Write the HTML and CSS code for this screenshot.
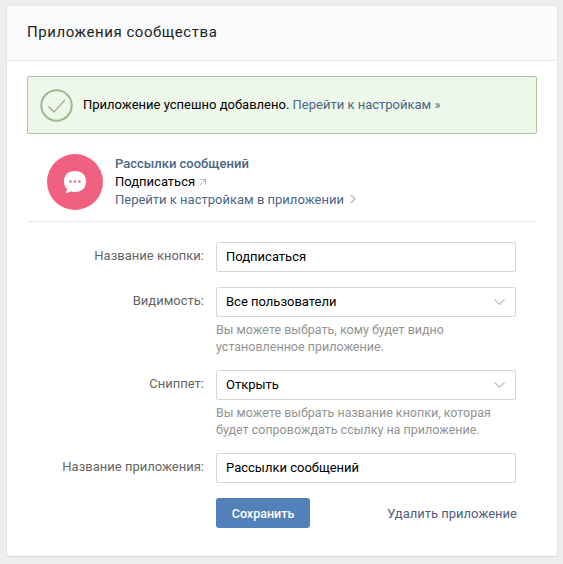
FILE: index.html
```html
<!DOCTYPE html>
<html>
<head>
<title>Приложения сообщества</title>
<meta charset="utf-8" />
<link rel="stylesheet" href="styles.css">
</head>

<body>

<div class="page">

	<div class="header">Приложения сообщества</div>

	<div class="content">

		<div class="notice">
			<svg class="notice-icon" width="33" height="33" viewBox="0 0 33 33">
				<circle cx="16.5" cy="16.5" r="15.2" fill="none" stroke="#9bb98f" stroke-width="2" />
				<path d="M8.5 17.5l5.5 5.5 11-12" fill="none" stroke="#9bb98f" stroke-width="1.5" />
			</svg>
			<span class="notice-text">Приложение успешно добавлено. <a href="#">Перейти к настройкам »</a></span>
		</div>

		<div class="app">
			<div class="app-logo">
				<svg width="24" height="24" viewBox="0 0 24 24">
					<path d="M12 1c6.6 0 11 4 11 10.500S18.600 22 12 22c-1.500 0-3-.2-4.300-.7C6.400 22.400 4.500 23 2.500 23c1-1.200 1.500-2.600 1.500-4C2 17 1 14.500 1 11.500 1 5 5.400 1 12 1z" fill="#fff" />
					<circle cx="7.500" cy="11.500" r="1.200" fill="#f0607f" />
					<circle cx="12" cy="11.500" r="1.200" fill="#f0607f" />
					<circle cx="16.500" cy="11.500" r="1.200" fill="#f0607f" />
				</svg>
			</div>
			<div class="app-info">
				<a class="app-name" href="#">Рассылки сообщений</a>
				<div class="app-action">Подписаться
					<svg width="7" height="7" viewBox="0 0 7 7"><path d="M.5 6.500l6-6M1.500.5h5v5" fill="none" stroke="#99a2ad" stroke-width=".8" /></svg>
				</div>
				<a class="app-link" href="#">Перейти к настройкам в приложении
					<svg class="app-arrow" width="6" height="10" viewBox="0 0 6 10"><path d="M1 1l4 4-4 4" fill="none" stroke="#b4bcc6" stroke-width="1.300" /></svg>
				</a>
			</div>
		</div>

		<div class="form">

			<div class="row">
				<label class="label">Название кнопки:</label>
				<div class="field"><div class="input">Подписаться</div></div>
			</div>

			<div class="row">
				<label class="label">Видимость:</label>
				<div class="field">
					<div class="input select">Все пользователи
						<svg width="11" height="6" viewBox="0 0 11 6"><path d="M.5.5l5 5 5-5" fill="none" stroke="#b4bcc6" stroke-width="1.100" /></svg>
					</div>
					<p class="help">Вы можете выбрать, кому будет видно установленное приложение.</p>
				</div>
			</div>

			<div class="row">
				<label class="label">Сниппет:</label>
				<div class="field">
					<div class="input select">Открыть
						<svg width="11" height="6" viewBox="0 0 11 6"><path d="M.5.5l5 5 5-5" fill="none" stroke="#b4bcc6" stroke-width="1.100" /></svg>
					</div>
					<p class="help">Вы можете выбрать название кнопки, которая будет сопровождать ссылку на приложение.</p>
				</div>
			</div>

			<div class="row">
				<label class="label">Название приложения:</label>
				<div class="field"><div class="input">Рассылки сообщений</div></div>
			</div>

			<div class="row actions">
				<div class="label"></div>
				<div class="field buttons">
					<button class="save" type="button">Сохранить</button>
					<a class="remove" href="#">Удалить приложение</a>
				</div>
			</div>

		</div>

	</div>

</div>

</body>
</html>
```

FILE: styles.css
```css
html, body {
	height: 100%;
}

body {
	margin: 0;
	padding: 6px 6px 0 7px;
	box-sizing: border-box;
	background: #edeef0;
	font: 13px Roboto, "Liberation Sans", sans-serif;
	color: #000;
}

a {
	color: #4a6785;
	text-decoration: none;
}

.page {
	width: 550px;
	height: 550px;
	box-sizing: border-box;
	background: #fff;
	border-radius: 2px;
	box-shadow: 0 1px 0 0 #d7d8db, 0 0 0 1px #e3e4e8;
}

.header {
	height: 54px;
	padding-left: 20px;
	background: #fafbfc;
	border-bottom: 1px solid #e7e8ec;
	border-radius: 2px 2px 0 0;
	font-size: 15px;
	line-height: 53px;
	letter-spacing: 0.55px;
	color: #222;
}

.content {
	padding: 15px 20px 0;
}

.notice {
	display: flex;
	align-items: center;
	height: 58px;
	box-sizing: border-box;
	padding-left: 12px;
	background: #edf8ea;
	border: 1px solid #a8c4a0;
	border-radius: 2px;
}

.notice-icon {
	margin-right: 10px;
}

.notice-text {
	padding-bottom: 2px;
}

.app {
	display: flex;
	margin-top: 8px;
	padding: 12px 0 11px 20px;
	border-bottom: 1px solid #e7e8ec;
}

.app-logo {
	display: flex;
	align-items: center;
	justify-content: center;
	width: 56px;
	height: 56px;
	margin-right: 12px;
	background: #f0607f;
	border-radius: 50%;
}

.app-info {
	padding-top: 1px;
	line-height: 18px;
}

.app-name {
	display: block;
	font-weight: 500;
}

.app-action svg {
	margin-left: 1px;
}

.app-arrow {
	margin-left: 3px;
}

.form {
	padding-top: 20px;
}

.row {
	display: flex;
	margin-bottom: 15px;
}

.label {
	width: 177px;
	margin-right: 12px;
	padding-top: 6px;
	text-align: right;
	color: #656565;
	flex-shrink: 0;
}

.field {
	width: 300px;
}

.input {
	display: flex;
	align-items: center;
	justify-content: space-between;
	height: 30px;
	box-sizing: border-box;
	padding: 0 10px 1px 9px;
	background: #fff;
	border: 1px solid #d3d9de;
	border-radius: 2px;
}

.help {
	margin: 4px 0 0;
	font-size: 12.5px;
	line-height: 17px;
	color: #939393;
}

.buttons {
	display: flex;
	align-items: center;
	justify-content: space-between;
	width: 301px;
}

.save {
	width: 94px;
	height: 30px;
	padding: 0;
	background: #5181b8;
	border: 0;
	border-radius: 3px;
	color: #fff;
	font: 500 12.5px Roboto, "Liberation Sans", sans-serif;
}

.remove {
	color: #4d6078;
}
```
